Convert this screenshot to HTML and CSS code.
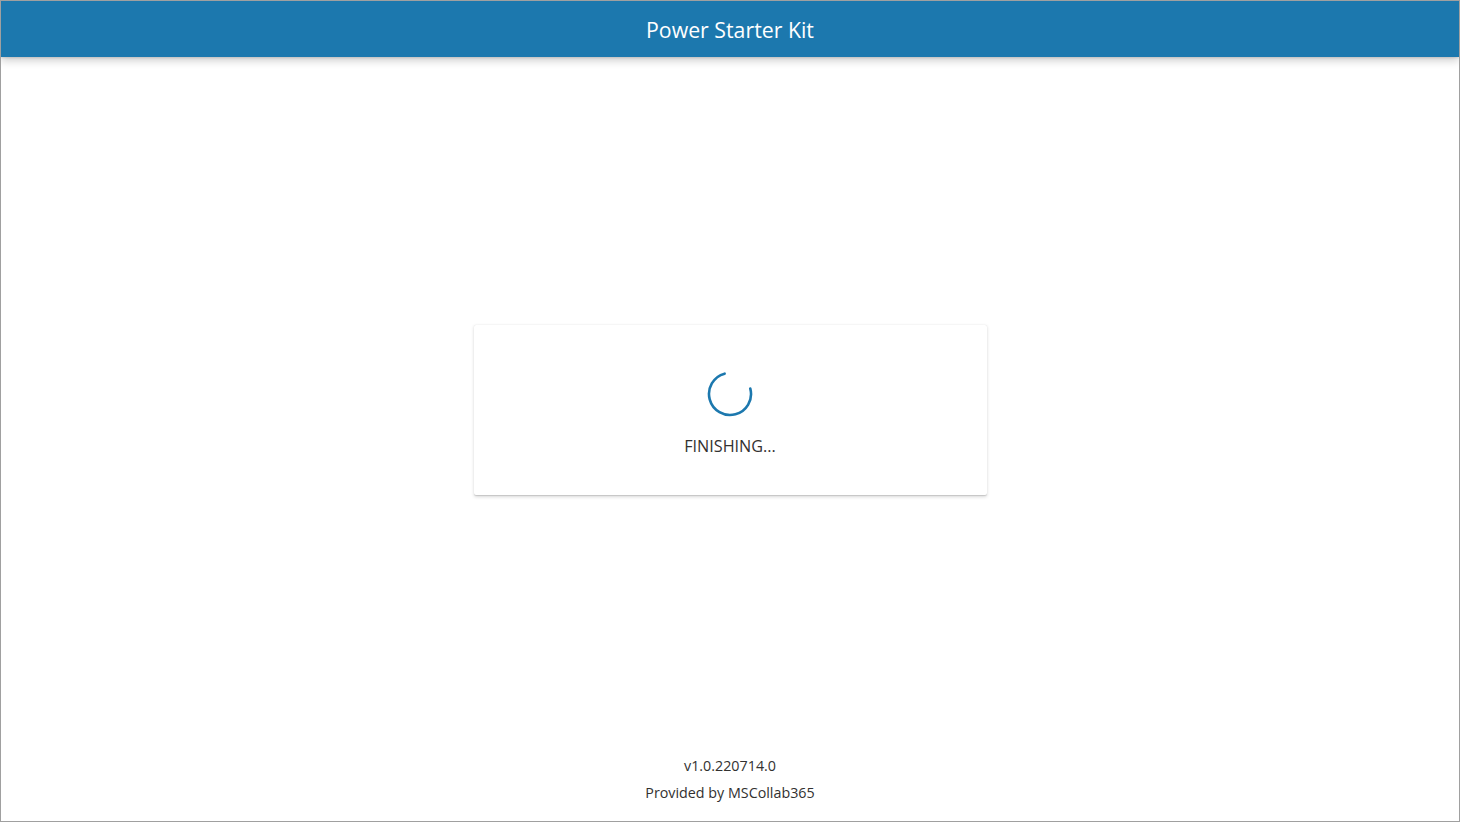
FILE: index.html
```html
<!DOCTYPE html>
<html>
<head>
<meta charset="utf-8">
<link rel="stylesheet" href="styles.css">
</head>
<body>
<div class="frame">
  <header class="topbar">Power Starter Kit</header>
  <main class="main">
    <div class="card">
      <svg class="spinner" width="46" height="46" viewBox="0 0 46 46">
        <path d="M 17.6 2.7 A 21 21 0 1 0 43.3 17.6" fill="none" stroke="#1c78ae" stroke-width="2.6" stroke-linecap="round"/>
      </svg>
      <div class="status">FINISHING...</div>
    </div>
  </main>
  <footer class="footer">
    <div class="line">v1.0.220714.0</div>
    <div class="line">Provided by MSCollab365</div>
  </footer>
</div>
</body>
</html>
```
FILE: styles.css
```css
html, body {
  margin: 0;
  padding: 0;
  background: #ffffff;
}
body {
  font-family: "Open Sans", "Noto Sans", "Liberation Sans", sans-serif;
  color: #323130;
}
.frame {
  box-sizing: border-box;
  width: 1460px;
  height: 822px;
  border: 1px solid #a0a0a0;
  display: flex;
  flex-direction: column;
  overflow: hidden;
}
.topbar {
  height: 56px;
  flex: 0 0 56px;
  background: #1c78ae;
  color: #ffffff;
  font-size: 21.3px;
  display: flex;
  align-items: center;
  justify-content: center;
  padding-top: 1px;
  box-sizing: border-box;
  box-shadow: 0 4px 8px rgba(0,0,0,0.18), 0 1px 2px rgba(0,0,0,0.12);
  position: relative;
  z-index: 1;
}
.main {
  flex: 1;
  display: flex;
  align-items: center;
  justify-content: center;
  padding-top: 11px;
}
.card {
  box-sizing: border-box;
  width: 513px;
  height: 170px;
  background: #fff;
  box-shadow: 0 1.6px 3.6px rgba(0,0,0,0.15), 0 0.3px 0.9px rgba(0,0,0,0.12);
  border-radius: 2px;
  display: flex;
  flex-direction: column;
  align-items: center;
  padding-top: 46px;
}
.spinner {
  display: block;
}
.status {
  margin-top: 18px;
  font-size: 16.2px;
  line-height: 22px;
  color: #323130;
}
.footer {
  flex: 0 0 auto;
  padding-bottom: 15px;
  text-align: center;
  font-size: 14.3px;
  color: #323130;
}
.footer .line {
  line-height: 27px;
}
```
